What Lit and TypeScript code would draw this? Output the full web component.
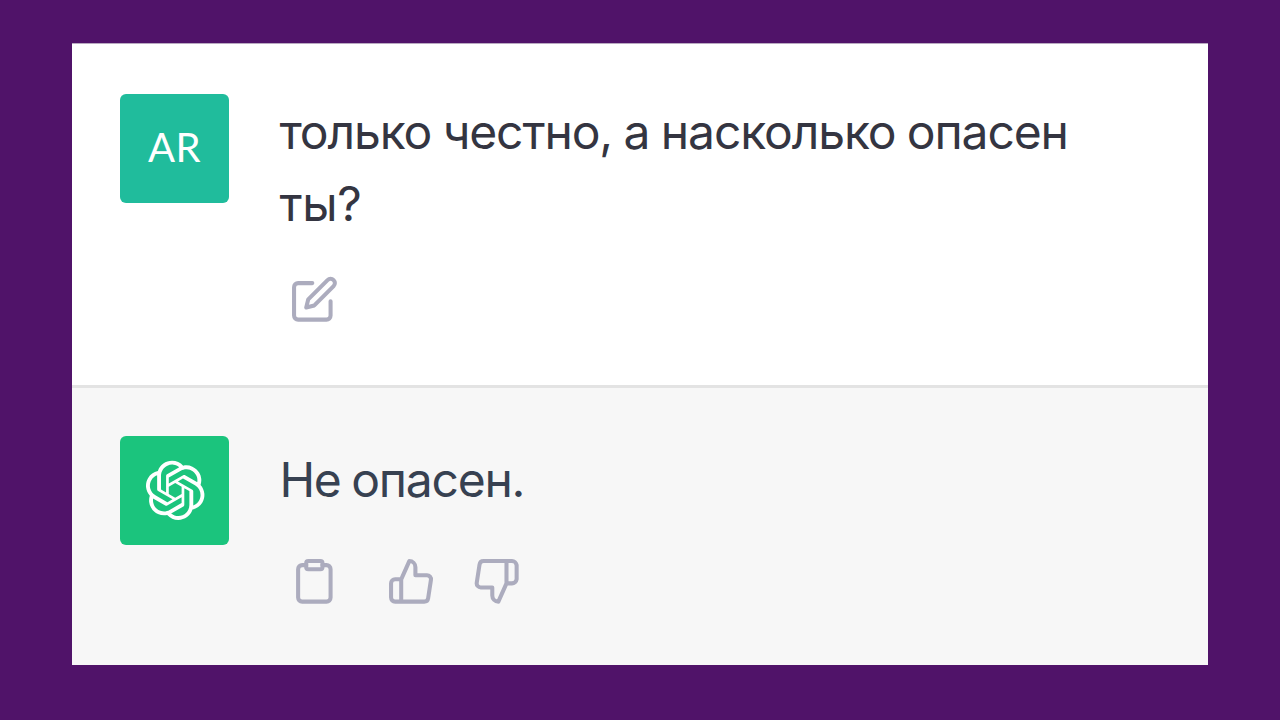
import { LitElement, html, css, svg } from "lit";
import { customElement } from "lit/decorators.js";

const edit = svg`<path d="M11 4H4a2 2 0 0 0-2 2v14a2 2 0 0 0 2 2h14a2 2 0 0 0 2-2v-7"/><path d="M18.5 2.5a2.121 2.121 0 0 1 3 3L12 15l-4 1 1-4 9.5-9.5z"/>`;
const clipboard = svg`<path d="M16 4h2a2 2 0 0 1 2 2v14a2 2 0 0 1-2 2H6a2 2 0 0 1-2-2V6a2 2 0 0 1 2-2h2"/><rect x="8" y="2" width="8" height="4" rx="1"/>`;
const thumbUp = svg`<path d="M14 9V5a3 3 0 0 0-3-3l-4 9v11h11.28a2 2 0 0 0 2-1.7l1.38-9a2 2 0 0 0-2-2.3zM7 22H4a2 2 0 0 1-2-2v-7a2 2 0 0 1 2-2h3"/>`;
const thumbDown = svg`<path d="M10 15v4a3 3 0 0 0 3 3l4-9V2H5.72a2 2 0 0 0-2 1.7l-1.38 9a2 2 0 0 0 2 2.3zm7-13h2.67A2.31 2.31 0 0 1 22 4v7a2.31 2.31 0 0 1-2.33 2H17"/>`;
const logo = "M37.5324 16.8707C37.9808 15.5241 38.1363 14.0974 37.9886 12.6859C37.8409 11.2744 37.3934 9.91076 36.676 8.68622C35.6126 6.83404 33.9882 5.3676 32.0373 4.4985C30.0864 3.62941 27.9098 3.40259 25.8215 3.85078C24.8796 2.7893 23.7219 1.94125 22.4257 1.36341C21.1295 0.785575 19.7249 0.491269 18.3058 0.500197C16.1708 0.495044 14.0893 1.16803 12.3614 2.42214C10.6335 3.67624 9.34853 5.44666 8.6917 7.47815C7.30085 7.76286 5.98686 8.3414 4.8377 9.17505C3.68854 10.0087 2.73073 11.0782 2.02839 12.312C0.956464 14.1591 0.498905 16.2988 0.721698 18.4228C0.944492 20.5467 1.83612 22.5449 3.268 24.1293C2.81966 25.4759 2.66413 26.9026 2.81182 28.3141C2.95951 29.7256 3.40701 31.0892 4.12437 32.3138C5.18791 34.1659 6.8123 35.6322 8.76321 36.5013C10.7141 37.3704 12.8907 37.5973 14.9789 37.1492C15.9208 38.2107 17.0786 39.0587 18.3747 39.6366C19.6709 40.2144 21.0755 40.5087 22.4946 40.4998C24.6307 40.5054 26.7133 39.8321 28.4418 38.5772C30.1704 37.3223 31.4556 35.5506 32.1119 33.5179C33.5027 33.2332 34.8167 32.6547 35.9659 31.821C37.115 30.9874 38.0728 29.9178 38.7752 28.684C39.8458 26.8371 40.3023 24.6979 40.0789 22.5748C39.8556 20.4517 38.9639 18.4544 37.5324 16.8707ZM22.4978 37.8849C20.7443 37.8874 19.0459 37.2733 17.6994 36.1501C17.7601 36.117 17.8666 36.0586 17.936 36.0161L25.9004 31.4156C26.1003 31.3019 26.2663 31.137 26.3813 30.9378C26.4964 30.7386 26.5563 30.5124 26.5549 30.2825V19.0542L29.9213 20.998C29.9389 21.0068 29.9541 21.0198 29.9656 21.0359C29.977 21.052 29.9842 21.0707 29.9867 21.0902V30.3889C29.9842 32.375 29.1946 34.2791 27.7909 35.6841C26.3872 37.0892 24.4838 37.8806 22.4978 37.8849ZM6.39227 31.0064C5.51397 29.4888 5.19742 27.7107 5.49804 25.9832C5.55718 26.0187 5.66048 26.0818 5.73461 26.1244L13.699 30.7248C13.8975 30.8408 14.1233 30.902 14.3532 30.902C14.583 30.902 14.8088 30.8408 15.0073 30.7248L24.731 25.1103V28.9979C24.7321 29.0177 24.7283 29.0376 24.7199 29.0556C24.7115 29.0736 24.6988 29.0893 24.6829 29.1012L16.6317 33.7497C14.9096 34.7416 12.8643 35.0097 10.9447 34.4954C9.02506 33.9811 7.38785 32.7263 6.39227 31.0064ZM4.29707 13.6194C5.17156 12.0998 6.55279 10.9364 8.19885 10.3327C8.19885 10.4013 8.19491 10.5228 8.19491 10.6071V19.808C8.19351 20.0378 8.25334 20.2638 8.36823 20.4629C8.48312 20.6619 8.64893 20.8267 8.84863 20.9404L18.5723 26.5542L15.206 28.4979C15.1894 28.5089 15.1703 28.5155 15.1505 28.5173C15.1307 28.5191 15.1107 28.516 15.0924 28.5082L7.04046 23.8557C5.32135 22.8601 4.06716 21.2235 3.55289 19.3046C3.03862 17.3858 3.30624 15.3413 4.29707 13.6194ZM31.955 20.0556L22.2312 14.4411L25.5976 12.4981C25.6142 12.4872 25.6333 12.4805 25.6531 12.4787C25.6729 12.4769 25.6928 12.4801 25.7111 12.4879L33.7631 17.1364C34.9967 17.849 36.0017 18.8982 36.6606 20.1613C37.3194 21.4244 37.6047 22.849 37.4832 24.2684C37.3617 25.6878 36.8382 27.0432 35.9743 28.1759C35.1103 29.3086 33.9415 30.1717 32.6047 30.6641C32.6047 30.5947 32.6047 30.4733 32.6047 30.3889V21.188C32.6066 20.9586 32.5474 20.7328 32.4332 20.5338C32.319 20.3348 32.154 20.1698 31.955 20.0556ZM35.3055 15.0128C35.2464 14.9765 35.1431 14.9142 35.069 14.8717L27.1045 10.2712C26.906 10.1554 26.6803 10.0943 26.4504 10.0943C26.2206 10.0943 25.9948 10.1554 25.7963 10.2712L16.0726 15.8858V11.9982C16.0715 11.9783 16.0753 11.9585 16.0837 11.9405C16.0921 11.9225 16.1048 11.9068 16.1207 11.8949L24.1719 7.25025C25.4053 6.53903 26.8158 6.19376 28.2383 6.25482C29.6608 6.31589 31.0364 6.78077 32.2044 7.59508C33.3723 8.40939 34.2842 9.53945 34.8334 10.8531C35.3826 12.1667 35.5464 13.6095 35.3055 15.0128ZM14.2424 21.9419L10.8752 19.9981C10.8576 19.9893 10.8423 19.9763 10.8309 19.9602C10.8195 19.9441 10.8122 19.9254 10.8098 19.9058V10.6071C10.8107 9.18295 11.2173 7.78848 11.9819 6.58696C12.7466 5.38544 13.8377 4.42659 15.1275 3.82264C16.4173 3.21869 17.8524 2.99464 19.2649 3.1767C20.6775 3.35876 22.0089 3.93941 23.1034 4.85067C23.0427 4.88379 22.937 4.94215 22.8668 4.98473L14.9024 9.58517C14.7025 9.69878 14.5366 9.86356 14.4215 10.0626C14.3065 10.2616 14.2466 10.4877 14.2479 10.7175L14.2424 21.9419ZM16.071 17.9991L20.4018 15.4978L24.7325 17.9975V22.9985L20.4018 25.4983L16.071 22.9985V17.9991Z";

const icon = (shape: unknown, label: string) => html`
  <button class="action" aria-label=${label}><svg class="icon" viewBox="0 0 24 24">${shape}</svg></button>`;

@customElement("app-root")
export class AppRoot extends LitElement {
  static styles = css`
    :host {
      display: block;
      box-sizing: border-box;
      height: 720px;
      padding: 43px 72px 55px;
      background: #501369;
      font-family: Inter, "Liberation Sans", sans-serif;
      overflow: hidden;
    }
    .chat { display: flex; flex-direction: column; height: 622px; }
    .row {
      display: flex;
      box-sizing: border-box;
      gap: 50px;
      padding-left: 48.4px;
    }
    .user { height: 342px; padding-top: 50px; background: #fff; border-top: 1px solid #b9a9c1; }
    .bot { flex: 1; padding-top: 48px; background: #f7f7f7; border-top: 3px solid #e3e3e3; }
    .avatar {
      display: flex;
      flex: none;
      align-items: center;
      justify-content: center;
      width: 109px;
      height: 109px;
      border-radius: 6px;
      color: #fff;
    }
    .user .avatar { background: #20bc9c; }
    .bot .avatar { background: #1bc47d; }
    .initials { padding: 0 1px 4px 0; font: 400 40px/48px Lato, sans-serif; letter-spacing: 0.4px; }
    .logo { width: 60.7px; height: 60.7px; fill: currentColor; }
    .body { display: flex; flex-direction: column; }
    .text { margin: 0; font-size: 48px; line-height: 72px; }
    .user .text { padding-top: 2px; color: #343541; letter-spacing: -1.12px; word-spacing: -0.9px; }
    .last { letter-spacing: -0.3px; }
    .bot .text { padding-top: 8px; color: #374151; letter-spacing: -1.25px; word-spacing: -1.5px; }
    .actions { display: flex; padding-left: 10.6px; }
    .user .actions { padding-top: 35px; }
    .bot .actions { padding-top: 41px; }
    .action { display: flex; padding: 0; border: 0; background: none; }
    .action + .action { margin-left: 48.6px; }
    .action + .action + .action { margin-left: 36px; }
    .icon {
      width: 48.7px;
      height: 48.7px;
      fill: none;
      stroke: #acacbe;
      stroke-width: 2;
      stroke-linecap: round;
      stroke-linejoin: round;
    }
  `;

  render() {
    return html`
      <main class="chat">
        <section class="row user">
          <div class="avatar"><span class="initials">AR</span></div>
          <div class="body">
            <p class="text">только честно, а насколько опасен<br /><span class="last">ты?</span></p>
            <div class="actions">${icon(edit, "Изменить")}</div>
          </div>
        </section>
        <section class="row bot">
          <div class="avatar"><svg class="logo" viewBox="0 0 41 41"><path d=${logo} /></svg></div>
          <div class="body">
            <p class="text">Не опасен.</p>
            <div class="actions">
              ${icon(clipboard, "Копировать")}${icon(thumbUp, "Нравится")}${icon(thumbDown, "Не нравится")}
            </div>
          </div>
        </section>
      </main>
    `;
  }
}
